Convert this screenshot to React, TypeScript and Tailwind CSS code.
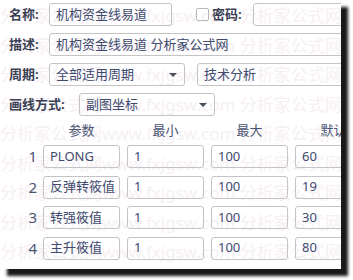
import React from "react";

const params = [
  { no: 1, name: "PLONG", min: "1", max: "100", def: "60" },
  { no: 2, name: "反弹转筱值", min: "1", max: "100", def: "19" },
  { no: 3, name: "转强筱值", min: "1", max: "100", def: "30" },
  { no: 4, name: "主升筱值", min: "1", max: "100", def: "80" },
];

const font = { fontFamily: '"Noto Sans", "Noto Sans CJK SC", sans-serif' };

const Field = ({ value, className = "" }: { value: string; className?: string }) => (
  <div
    className={`h-[23px] shrink-0 flex items-center px-[6px] border border-[#c4c4c4] rounded-[3px] text-[13px] text-[#3e4a6e] whitespace-nowrap overflow-hidden ${className}`}
  >
    {value}
  </div>
);

const Select = ({ value, className = "" }: { value: string; className?: string }) => (
  <div
    className={`h-[23px] shrink-0 flex items-center justify-between pl-[6px] pr-[7px] border border-[#c4c4c4] rounded-[3px] text-[13px] text-[#3e4a6e] whitespace-nowrap ${className}`}
  >
    <span>{value}</span>
    <span className="w-0 h-0 border-l-[4px] border-r-[4px] border-t-[4px] border-l-transparent border-r-transparent border-t-[#4a4f5c]" />
  </div>
);

const Label = ({ text, className = "" }: { text: string; className?: string }) => (
  <span className={`shrink-0 text-[13px] font-bold text-[#3b4154] ${className}`}>{text}</span>
);

export default function App() {
  const wm = "分析家公式网www.fxjgsw.com 分析家公式网www.fxjgsw.com";
  return (
    <div className="w-[353px] h-[280px] bg-white overflow-hidden" style={font}>
      <div className="relative w-[341px] h-[269px] bg-white overflow-hidden shadow-[7px_7px_3px_rgba(0,0,0,0.9)]">
        {/* watermark */}
        <div className="absolute inset-0 z-0 pointer-events-none flex flex-col pt-[1px] text-[17px] leading-[29.5px] text-[#f6eff4] whitespace-nowrap">
          {Array.from({ length: 10 }).map((_, i) => (
            <div key={i}>{wm}</div>
          ))}
        </div>

        <div className="relative z-10 pt-[3px] pl-[9px] flex flex-col">
          {/* name + password */}
          <div className="flex items-center h-[23px]">
            <Label text="名称:" className="w-[40px]" />
            <Field value="机构资金线易道" className="w-[123px]" />
            <span className="ml-[24px] w-[13px] h-[13px] border border-[#b8b8b8] rounded-[2px] shrink-0" />
            <Label text="密码:" className="ml-[3px] w-[41px]" />
            <Field value="" className="w-[100px]" />
          </div>

          {/* description */}
          <div className="flex items-center h-[23px] mt-[7px]">
            <Label text="描述:" className="w-[40px]" />
            <Field value="机构资金线易道 分析家公式网" className="w-[320px]" />
          </div>

          {/* period */}
          <div className="flex items-center h-[23px] mt-[7px]">
            <Label text="周期:" className="w-[40px]" />
            <Select value="全部适用周期" className="w-[136px]" />
            <Field value="技术分析" className="ml-[12px] w-[160px]" />
          </div>

          {/* draw mode */}
          <div className="flex items-center h-[23px] mt-[7px]">
            <Label text="画线方式:" className="w-[70px]" />
            <Select value="副图坐标" className="w-[136px]" />
          </div>

          {/* header */}
          <div className="flex items-center h-[22px] mt-[4px] text-[13px] text-[#4b5573]">
            <span className="w-[34px] shrink-0" />
            <span className="w-[77px] shrink-0 text-center">参数</span>
            <span className="ml-[7px] w-[77px] shrink-0 text-center">最小</span>
            <span className="ml-[7px] w-[77px] shrink-0 text-center">最大</span>
            <span className="ml-[7px] w-[77px] shrink-0 text-center">默认</span>
          </div>

          {/* params */}
          <div className="flex flex-col gap-[7.5px] mt-[3px]">
            {params.map((p) => (
              <div key={p.no} className="flex items-center h-[23px]">
                <span className="w-[34px] shrink-0 pr-[6px] text-right text-[15px] text-[#4b5573]">
                  {p.no}
                </span>
                <Field value={p.name} className="w-[77px]" />
                <Field value={p.min} className="ml-[7px] w-[77px]" />
                <Field value={p.max} className="ml-[7px] w-[77px]" />
                <Field value={p.def} className="ml-[7px] w-[77px]" />
              </div>
            ))}
          </div>
        </div>
      </div>
    </div>
  );
}
